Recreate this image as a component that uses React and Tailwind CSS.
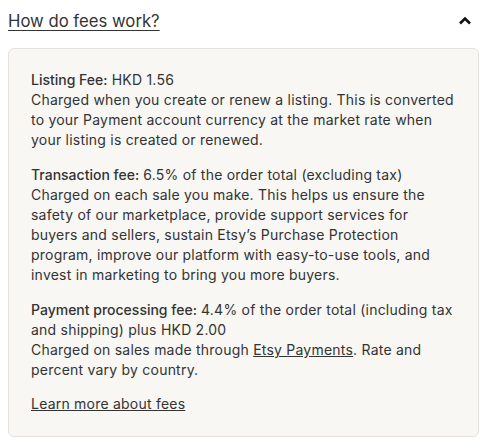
const font = { fontFamily: 'Inter, "Noto Sans", sans-serif' };

function Fee({ label, value, lines }) {
  return (
    <p className="mb-[15px]">
      <span className="font-medium tracking-normal">{label}</span> {value}
      {lines.map((line, i) => (
        <span key={i}>
          <br />
          {line}
        </span>
      ))}
    </p>
  );
}

export default function App() {
  return (
    <div className="h-[447px] w-[487px] bg-white px-2 text-[#222222]" style={font}>
      <div className="flex h-12 items-center justify-between pb-[7px]">
        <h2 className="text-[16.7px] leading-6 text-[#333] underline decoration-1 underline-offset-[3px]">How do fees work?</h2>
        <svg width="16" height="16" viewBox="0 0 16 16" className="mr-[6px]">
          <path d="M3 10.5 L8 5.5 L13 10.5" fill="none" stroke="#111" strokeWidth="2.6" />
        </svg>
      </div>
      <div className="rounded-md border border-[#e3e2dd] bg-[#f8f7f4] pl-[22px] pr-[10px] pt-[21px] pb-[22px] text-[14px] leading-5 tracking-[0.22px] text-[#333]">
        <Fee
          label="Listing Fee:"
          value="HKD 1.56"
          lines={[
            'Charged when you create or renew a listing. This is converted',
            'to your Payment account currency at the market rate when',
            'your listing is created or renewed.',
          ]}
        />
        <Fee
          label="Transaction fee:"
          value="6.5% of the order total (excluding tax)"
          lines={[
            'Charged on each sale you make. This helps us ensure the',
            'safety of our marketplace, provide support services for',
            'buyers and sellers, sustain Etsy’s Purchase Protection',
            'program, improve our platform with easy-to-use tools, and',
            'invest in marketing to bring you more buyers.',
          ]}
        />
        <p className="mb-[14px]">
          <span className="font-medium tracking-normal">Payment processing fee:</span> 4.4% of the order total (including tax
          <br />
          and shipping) plus HKD 2.00
          <br />
          Charged on sales made through <a className="underline">Etsy Payments</a>. Rate and
          <br />
          percent vary by country.
        </p>
        <a className="underline">Learn more about fees</a>
      </div>
    </div>
  );
}
